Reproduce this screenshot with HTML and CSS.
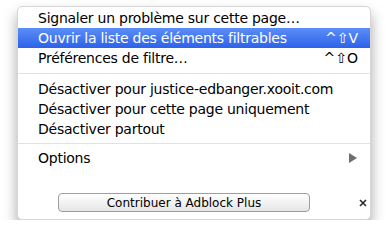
FILE: index.html
```html
<!DOCTYPE html>
<html lang="fr">
<head>
    <meta charset="UTF-8">
    <title>Adblock Plus</title>
    <link rel="stylesheet" href="styles.css">
</head>
<body>
    <div class="panel">
        <ul class="menu">
            <li class="item">Signaler un problème sur cette page…</li>
            <li class="item active">Ouvrir la liste des éléments filtrables <span class="key">^⇧V</span></li>
            <li class="item">Préférences de filtre… <span class="key">^⇧O</span></li>
            <li class="sep"></li>
            <li class="item">Désactiver pour justice-edbanger.xooit.com</li>
            <li class="item">Désactiver pour cette page uniquement</li>
            <li class="item">Désactiver partout</li>
            <li class="sep sep-low"></li>
            <li class="item">Options <span class="arrow"></span></li>
        </ul>
        <div class="footer">
            <button type="button" class="contrib">Contribuer à Adblock Plus</button>
            <svg class="close" width="8" height="8" viewBox="0 0 8 8">
                <path d="M1 1L7 7M7 1L1 7" stroke="#2a2a2a" stroke-width="1.6"/>
            </svg>
        </div>
    </div>
</body>
</html>
```

FILE: styles.css
```css
body { margin: 0; background: #fff; font-family: "DejaVu Sans", sans-serif; }
.panel {
    margin: 6px 17px 0 17px;
    width: 354px;
    height: 214px;
    box-sizing: border-box;
    border: 1px solid #d6d6d6;
    border-radius: 5px;
    background: #fff;
    box-shadow: 0 8px 14px rgba(0, 0, 0, 0.35);
    padding-top: 1px;
}
.menu { list-style: none; margin: 0; padding: 0; }
.item {
    display: flex;
    align-items: center;
    justify-content: space-between;
    height: 20px;
    padding: 0 12px 0 20px;
    font-size: 14px;
    letter-spacing: -0.25px;
    color: #000;
    white-space: nowrap;
}
.item.active {
    background: linear-gradient(#5b8ef6, #2d62ea);
    color: #fff;
}
.key { font-size: 14px; letter-spacing: 0; }
.sep { height: 1px; background: #e2e2e2; margin: 5px 0 5px; }
.sep-low { margin: 4px 0 4px; }
.arrow {
    width: 0; height: 0;
    border-top: 5px solid transparent;
    border-bottom: 5px solid transparent;
    border-left: 8px solid #6e6e6e;
    margin-right: 1px;
}
.footer {
    display: flex;
    align-items: center;
    padding: 25px 0 0 40px;
}
.contrib {
    width: 252px;
    height: 19px;
    padding: 0;
    border: 1px solid #9e9e9e;
    border-radius: 4px;
    background: linear-gradient(#ffffff, #f0f0f0 60%, #e6e6e6);
    font-family: "DejaVu Sans", sans-serif;
    font-size: 12px;
    color: #000;
}
.close { margin-left: 49px; }
```
